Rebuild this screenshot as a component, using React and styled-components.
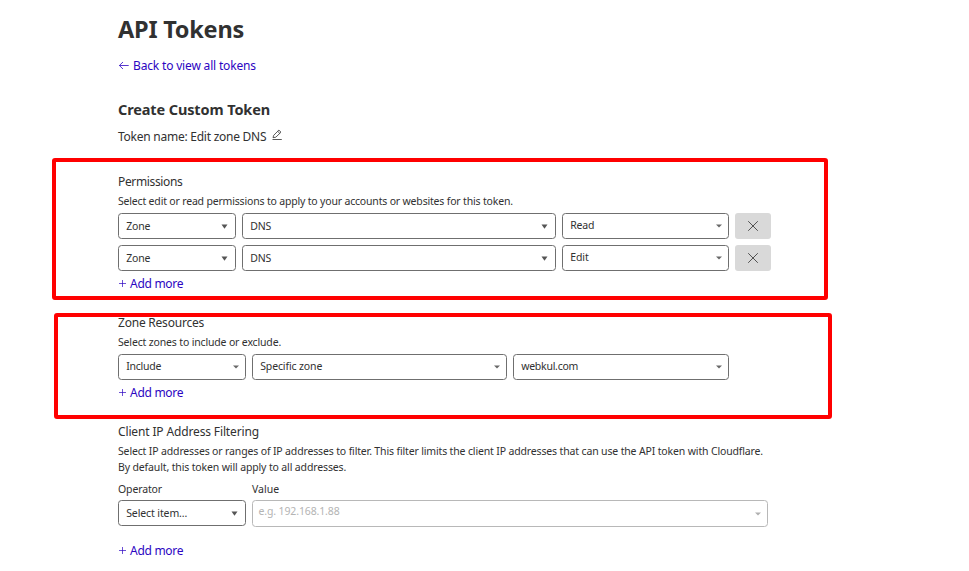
import React from "react";
import styled, { createGlobalStyle } from "styled-components";

const GlobalStyle = createGlobalStyle`
  * { box-sizing: border-box; }
  body {
    margin: 0;
    background: #fff;
    color: #313131;
    font-family: "Noto Sans", "Open Sans", sans-serif;
  }
`;

const Page = styled.main`
  position: relative;
  display: flex;
  flex-direction: column;
  align-items: flex-start;
  width: 969px;
  height: 571px;
  padding: 14px 0 0 118px;
  overflow: hidden;
  white-space: nowrap;
`;

const Title = styled.h1`
  margin: 0;
  font-size: 23.5px;
  line-height: 30px;
  font-weight: 700;
  letter-spacing: -0.24px;
`;

const ActionLink = styled.a`
  display: flex;
  align-items: center;
  gap: 3px;
  height: 20px;
  margin-top: ${(p) => p.$top}px;
  padding-top: 2px;
  font-size: 12px;
  line-height: 20px;
  letter-spacing: ${(p) => p.$ls}px;
  color: #2c05c2;
  text-decoration: none;
`;

const Subtitle = styled.h2`
  margin: 24px 0 0;
  font-size: 14.5px;
  line-height: 20px;
  font-weight: 700;
  letter-spacing: -0.12px;
`;

const TokenName = styled.div`
  display: flex;
  align-items: center;
  gap: 6px;
  height: 20px;
  margin: 7px 0 6px;
  padding-top: 2px;
  font-size: 12px;
  line-height: 20px;
  letter-spacing: -0.25px;
`;

const Section = styled.section`
  display: flex;
  flex-direction: column;
  align-items: flex-start;
  margin-top: 19px;
`;

const SectionTitle = styled.h3`
  height: 20px;
  margin: 0;
  font-size: 12px;
  line-height: 22px;
  font-weight: 400;
  letter-spacing: ${(p) => p.$ls}px;
`;

const Description = styled.p`
  margin: 2px 0 ${(p) => p.$bottom ?? 4}px;
  font-size: 10.5px;
  line-height: 16px;
  letter-spacing: ${(p) => p.$ls}px;
`;

const DescriptionLine = styled.span`
  display: block;
  letter-spacing: ${(p) => p.$ls}px;
`;

const Rows = styled.div`
  display: flex;
  flex-direction: column;
  gap: 6px;
`;

const Row = styled.div`
  display: flex;
  gap: 6px;
`;

const Field = styled.div`
  display: flex;
  flex-direction: column;
  gap: 3px;
`;

const Label = styled.label`
  font-size: 10.5px;
  line-height: 16px;
  letter-spacing: ${(p) => p.$ls || 0}px;
`;

const SelectBox = styled.div`
  display: flex;
  align-items: center;
  justify-content: space-between;
  width: ${(p) => p.$w}px;
  height: ${(p) => (p.$muted ? 27 : 26)}px;
  padding-right: ${(p) => (p.$native ? 7 : 6)}px;
  padding-left: ${(p) => (p.$muted ? 5.5 : 7.2)}px;
  border: 1px solid ${(p) => (p.$muted ? "#b8b8b8" : "#6f6f6f")};
  border-radius: 3.5px;
  color: ${(p) => (p.$muted ? "#b4b4b4" : "#313131")};
  font-size: 10.5px;
`;

const SelectText = styled.span`
  line-height: 16px;
  letter-spacing: ${(p) => p.$ls}px;
  padding-bottom: ${(p) => (p.$muted ? 5 : p.$native ? 0 : 2)}px;
`;

const RemoveButton = styled.button`
  display: flex;
  align-items: center;
  justify-content: center;
  width: 36px;
  height: 26px;
  padding: 0;
  border: 0;
  border-radius: 3px;
  background: #d9d9d9;
  color: #434343;
`;

const Highlight = styled.div`
  position: absolute;
  left: ${(p) => p.$x}px;
  top: ${(p) => p.$y}px;
  width: ${(p) => p.$w}px;
  height: ${(p) => p.$h}px;
  border: 4px solid #ff0000;
  border-radius: 3px;
  pointer-events: none;
`;

const Icon = styled.svg`
  display: block;
  flex: none;
  fill: none;
  stroke: currentColor;
`;

const RaisedIcon = styled(Icon)`
  margin-bottom: ${(p) => p.$lift}px;
`;

const BigCaret = () => (
  <Icon width="7" height="5" viewBox="0 0 7 5">
    <path d="M0.5 0.5H6.5L3.5 4.8Z" fill="#555" stroke="none" />
  </Icon>
);

const SmallCaret = ({ muted }) => (
  <Icon width="6" height="4" viewBox="0 0 6 4">
    <path d="M0 0.5H6L3 3.5Z" fill={muted ? "#b0b0b0" : "#686868"} stroke="none" />
  </Icon>
);

const ArrowIcon = () => (
  <Icon width="12" height="10" viewBox="0 0 12 10">
    <path d="M10.7 4.5H1.4M5 1L1.4 4.5L5 8" strokeWidth="0.8" />
  </Icon>
);

const PlusIcon = () => (
  <RaisedIcon $lift={1} width="9" height="9" viewBox="0 0 9 9">
    <path d="M4.5 1V8M1 4.5H8" strokeWidth="0.7" />
  </RaisedIcon>
);

const PencilIcon = () => (
  <RaisedIcon $lift={4} width="10" height="12" viewBox="0 0 10 12">
    <path d="M0.5 10.5H9.8" strokeWidth="0.8" />
    <path d="M1 8.7L1.7 6.3L6.9 1.1L9 3.2L3.8 8.2Z M5.7 2.3L7.8 4.4" strokeWidth="0.8" />
  </RaisedIcon>
);

const CloseIcon = () => (
  <Icon width="12" height="12" viewBox="0 0 12 12">
    <path d="M1.2 1.2L10.8 10.8M10.8 1.2L1.2 10.8" strokeWidth="0.9" />
  </Icon>
);

function Select({ text, w, ls, native, muted }) {
  return (
    <SelectBox $w={w} $native={native} $muted={muted}>
      <SelectText $ls={ls} $native={native} $muted={muted}>{text}</SelectText>
      {native ? <BigCaret /> : <SmallCaret muted={muted} />}
    </SelectBox>
  );
}

const AddMore = ({ top = 2 }) => (
  <ActionLink $top={top} $ls={-0.28}>
    <PlusIcon />
    Add more
  </ActionLink>
);

const permissions = [
  { access: "Read", ls: -0.2 },
  { access: "Edit", ls: -0.08 },
];

export default function App() {
  return (
    <>
      <GlobalStyle />
      <Page>
        <Title>API Tokens</Title>
        <ActionLink $top={11} $ls={-0.17}>
          <ArrowIcon />
          Back to view all tokens
        </ActionLink>
        <Subtitle>Create Custom Token</Subtitle>
        <TokenName>
          Token name: Edit zone DNS
          <PencilIcon />
        </TokenName>

        <Section>
          <SectionTitle $ls={-0.35}>Permissions</SectionTitle>
          <Description $ls={-0.18}>
            Select edit or read permissions to apply to your accounts or websites for this token.
          </Description>
          <Rows>
            {permissions.map((p) => (
              <Row key={p.access}>
                <Select native text="Zone" w={118} ls={-0.18} />
                <Select native text="DNS" w={314} ls={-0.13} />
                <Select text={p.access} w={167} ls={p.ls} />
                <RemoveButton aria-label="Remove"><CloseIcon /></RemoveButton>
              </Row>
            ))}
          </Rows>
          <AddMore />
        </Section>

        <Section>
          <SectionTitle $ls={-0.22}>Zone Resources</SectionTitle>
          <Description $ls={-0.16}>Select zones to include or exclude.</Description>
          <Row>
            <Select text="Include" w={128} ls={-0.24} />
            <Select text="Specific zone" w={255} ls={-0.13} />
            <Select text="webkul.com" w={216} ls={-0.25} />
          </Row>
          <AddMore />
        </Section>

        <Section>
          <SectionTitle $ls={-0.14}>Client IP Address Filtering</SectionTitle>
          <Description $ls={-0.15} $bottom={6}>
            <DescriptionLine $ls={-0.15}>
              Select IP addresses or ranges of IP addresses to filter. This filter limits the client IP addresses that can use the API token with Cloudflare.
            </DescriptionLine>
            <DescriptionLine $ls={-0.14}>By default, this token will apply to all addresses.</DescriptionLine>
          </Description>
          <Row>
            <Field>
              <Label $ls={-0.13}>Operator</Label>
              <Select native text="Select item..." w={128} ls={-0.11} />
            </Field>
            <Field>
              <Label>Value</Label>
              <Select muted text="e.g. 192.168.1.88" w={516} ls={-0.13} />
            </Field>
          </Row>
          <AddMore top={13} />
        </Section>

        <Highlight $x={52} $y={158} $w={776} $h={142} />
        <Highlight $x={54} $y={313} $w={778} $h={106} />
      </Page>
    </>
  );
}
